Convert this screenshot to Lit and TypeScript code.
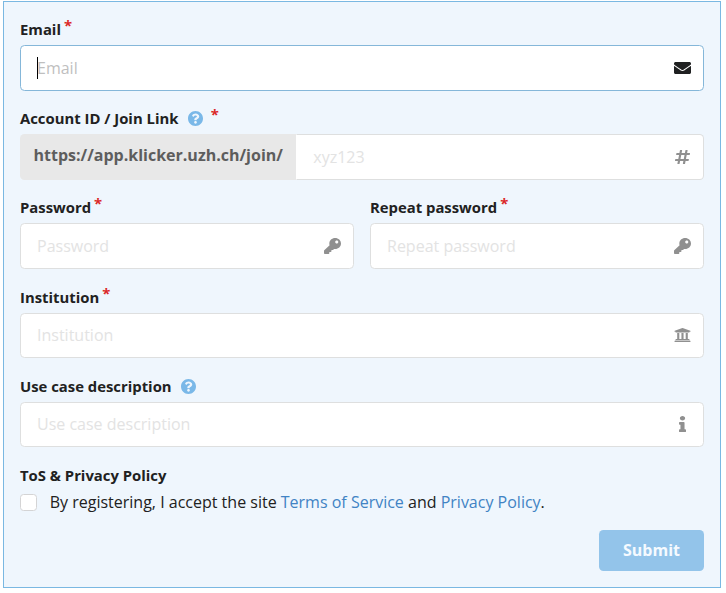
import { LitElement, html, css, svg, nothing } from "lit";
import { customElement, property } from "lit/decorators.js";

const icons: Record<string, { box: string; w: number; h: number; d: string }> = {
  envelope: {
    box: "0 64 512 384", w: 17, h: 12,
    d: "M502.3 190.8c3.9-3.1 9.7-.2 9.7 4.7V400c0 26.5-21.5 48-48 48H48c-26.5 0-48-21.5-48-48V195.6c0-5 5.7-7.8 9.7-4.7 22.4 17.4 52.1 39.5 154.1 113.6 21.1 15.4 56.7 47.8 92.2 47.6 35.7.3 72-32.8 92.3-47.6 102-74.1 131.6-96.3 154-113.7zM256 320c23.2.4 56.6-29.2 73.4-41.4 132.7-96.3 142.8-104.7 173.4-128.7 5.8-4.5 9.2-11.5 9.2-18.9v-19c0-26.5-21.5-48-48-48H48c-26.5 0-48 21.5-48 48v19c0 7.4 3.4 14.3 9.2 18.9 30.6 23.9 40.7 32.4 173.4 128.7 16.8 12.2 50.2 41.8 73.4 41.4z",
  },
  hashtag: {
    box: "0 0 448 512", w: 15, h: 16,
    d: "M440.667 182.109l7.143-40c1.313-7.355-4.342-14.109-11.813-14.109h-74.81l14.623-81.891C377.123 38.754 371.468 32 363.997 32h-40.632a12 12 0 0 0-11.813 9.891L296.175 128H197.54l14.623-81.891C213.477 38.754 207.822 32 200.35 32h-40.632a12 12 0 0 0-11.813 9.891L132.528 128H53.432a12 12 0 0 0-11.813 9.891l-7.143 40C33.163 185.246 38.818 192 46.289 192h74.81L98.242 320H19.146a12 12 0 0 0-11.813 9.891l-7.143 40C-1.123 377.246 4.532 384 12.003 384h74.81L72.19 465.891C70.877 473.246 76.532 480 84.003 480h40.632a12 12 0 0 0 11.813-9.891L151.826 384h98.634l-14.623 81.891C234.523 473.246 240.178 480 247.65 480h40.632a12 12 0 0 0 11.813-9.891L315.472 384h79.096a12 12 0 0 0 11.813-9.891l7.143-40c1.313-7.355-4.342-14.109-11.813-14.109h-74.81l22.857-128h79.096a12 12 0 0 0 11.813-9.891zM261.889 320h-98.634l22.857-128h98.634l-22.857 128z",
  },
  key: {
    box: "0 0 512 512", w: 17, h: 16,
    d: "M512 176.001C512 273.203 433.202 352 336 352c-11.22 0-22.19-1.062-32.827-3.069l-24.012 27.014A23.999 23.999 0 0 1 261.223 384H224v40c0 13.255-10.745 24-24 24h-40v40c0 13.255-10.745 24-24 24H24c-13.255 0-24-10.745-24-24v-78.059c0-6.365 2.529-12.47 7.029-16.971l161.802-161.802C163.108 213.814 160 195.271 160 176 160 78.798 238.797.001 335.999 0 433.488-.001 512 78.511 512 176.001zM336 128c0 26.51 21.49 48 48 48s48-21.49 48-48-21.49-48-48-48-48 21.49-48 48z",
  },
  university: {
    box: "0 0 512 512", w: 17, h: 16,
    d: "M496 128v16a8 8 0 0 1-8 8h-24v12c0 6.627-5.373 12-12 12H60c-6.627 0-12-5.373-12-12v-12H24a8 8 0 0 1-8-8v-16a8 8 0 0 1 4.941-7.392l232-88a7.996 7.996 0 0 1 6.118 0l232 88A8 8 0 0 1 496 128zm-24 304H40c-13.255 0-24 10.745-24 24v16a8 8 0 0 0 8 8h464a8 8 0 0 0 8-8v-16c0-13.255-10.745-24-24-24zM96 192v192H60c-6.627 0-12 5.373-12 12v20h416v-20c0-6.627-5.373-12-12-12h-36V192h-64v192h-64V192h-64v192h-64V192H96z",
  },
  info: {
    box: "0 0 192 512", w: 7, h: 16,
    d: "M20 424.229h20V279.771H20c-11.046 0-20-8.954-20-20V212c0-11.046 8.954-20 20-20h112c11.046 0 20 8.954 20 20v212.229h20c11.046 0 20 8.954 20 20V492c0 11.046-8.954 20-20 20H20c-11.046 0-20-8.954-20-20v-47.771c0-11.046 8.954-20 20-20zM96 0C56.235 0 24 32.235 24 72s32.235 72 72 72 72-32.235 72-72S135.764 0 96 0z",
  },
  question: {
    box: "8 8 496 496", w: 15, h: 15,
    d: "M504 256c0 136.997-111.043 248-248 248S8 392.997 8 256C8 119.083 119.043 8 256 8s248 111.083 248 248zM262.655 90c-54.497 0-89.255 22.957-116.549 63.758-3.536 5.286-2.353 12.415 2.715 16.258l34.699 26.31c5.205 3.947 12.621 3.008 16.665-2.122 17.864-22.658 30.113-35.797 57.303-35.797 20.429 0 45.698 13.148 45.698 32.958 0 14.976-12.363 22.667-32.534 33.976C247.128 238.528 216 254.941 216 296v4c0 6.627 5.373 12 12 12h56c6.627 0 12-5.373 12-12v-1.333c0-28.462 83.186-29.647 83.186-106.667 0-58.002-60.165-102-116.531-102zM256 338c-25.365 0-46 20.635-46 46 0 25.364 20.635 46 46 46s46-20.636 46-46c0-25.365-20.635-46-46-46z",
  },
};

const icon = (name: string) => {
  const i = icons[name];
  return html`<svg class="icon" width=${i.w} height=${i.h} viewBox=${i.box} preserveAspectRatio="none" aria-hidden="true">
    ${svg`<path fill="currentColor" d=${i.d}></path>`}
  </svg>`;
};

@customElement("form-field")
class FormField extends LitElement {
  @property() label = "";
  @property() hint = "";
  @property() prefixText = "";
  @property() icon = "";
  @property({ type: Boolean }) help = false;
  @property({ type: Boolean }) required = false;
  @property({ type: Boolean }) active = false;

  static styles = css`
    :host { display: block; min-width: 0; }
    .label {
      display: flex; align-items: center; height: 27.6px; box-sizing: border-box;
      padding: 0.6px 0 4px; font-size: 14.857px; font-weight: 700; line-height: 23px;
      white-space: nowrap;
    }
    .help { display: flex; margin-left: 9.6px; color: #7ab8e8; }
    .star { margin: -8px 0 0 3px; color: #db2828; }
    .help + .star { margin-left: 7.8px; }
    .control {
      display: flex; box-sizing: border-box; height: 45.6px; font-size: 16px;
    }
    .prefix {
      display: flex; align-items: center; width: 276px; box-sizing: border-box;
      padding: 0 0 4px 13.5px; background: #e8e8e8; color: #5d5d5d; font-weight: 700;
      border-radius: 4.5px 0 0 4.5px; white-space: nowrap;
    }
    .box {
      flex: 1; min-width: 0; display: flex; align-items: center; box-sizing: border-box;
      border: 1px solid #dedfdf; border-radius: 4.5px; background: #fff; padding-left: 16px;
      color: #e3e3e3;
    }
    .prefix + .box { border-left-color: transparent; border-radius: 0 4.5px 4.5px 0; padding-left: 16.3px; }
    .box.active { border-color: #85b7d9; color: #bfbfbf; }
    .caret { width: 1px; height: 22px; margin-right: -1px; background: #000; }
    .hint { flex: 1; white-space: nowrap; }
    .slot { width: 41px; display: flex; justify-content: center; color: #909090; }
    .active .slot { padding-top: 1px; color: #1f2021; }
    .icon { display: block; }
  `;

  render() {
    return html`
      <div class="label">
        <span>${this.label}</span>
        ${this.help ? html`<span class="help">${icon("question")}</span>` : nothing}
        ${this.required ? html`<span class="star">*</span>` : nothing}
      </div>
      <div class="control">
        ${this.prefixText ? html`<span class="prefix">${this.prefixText}</span>` : nothing}
        <div class="box ${this.active ? "active" : ""}">
          ${this.active ? html`<span class="caret"></span>` : nothing}
          <span class="hint">${this.hint}</span>
          <span class="slot">${icon(this.icon)}</span>
        </div>
      </div>
    `;
  }
}

@customElement("app-root")
class AppRoot extends LitElement {
  static styles = css`
    :host {
      display: block; box-sizing: border-box; height: 593px; padding: 1px 5px 5px 3px;
      background: #fff; color: #212121; font-family: "Open Sans", "Noto Sans", sans-serif;
      font-size: 16px;
    }
    .panel {
      box-sizing: border-box; height: 587px; border: 1px solid #7ab8e2;
      background: #eff6fd; padding: 15.35px 16px 16px;
      display: flex; flex-direction: column;
    }
    .fields { display: flex; flex-direction: column; gap: 16px; }
    .pair { display: grid; grid-template-columns: 1fr 1fr; gap: 16px; }
    .title {
      margin-top: 16.6px; font-size: 14.857px; font-weight: 700; line-height: 23px;
    }
    .accept { display: flex; align-items: center; height: 24px; margin-top: 3px; }
    .check {
      width: 17px; height: 17px; box-sizing: border-box; margin: 1px 12.7px 0 0;
      border: 1px solid #d4d4d5; border-radius: 3.5px; background: #fff;
    }
    .link { color: #4183c4; text-decoration: none; }
    .submit {
      align-self: flex-end; margin: auto 0 0; width: 105px; height: 41px; padding: 0 0 1px;
      border: 0; border-radius: 4.5px; background: #93c4ea; color: #f5faff;
      font: 700 16px "Open Sans", "Noto Sans", sans-serif;
    }
  `;

  render() {
    return html`
      <form class="panel">
        <div class="fields">
          <form-field label="Email" hint="Email" icon="envelope" required active></form-field>
          <form-field label="Account ID / Join Link" hint="xyz123" icon="hashtag"
            .prefixText=${"https://app.klicker.uzh.ch/join/"} help required></form-field>
          <div class="pair">
            <form-field label="Password" hint="Password" icon="key" required></form-field>
            <form-field label="Repeat password" hint="Repeat password" icon="key" required></form-field>
          </div>
          <form-field label="Institution" hint="Institution" icon="university" required></form-field>
          <form-field label="Use case description" hint="Use case description" icon="info" help></form-field>
        </div>
        <div class="title">ToS &amp; Privacy Policy</div>
        <div class="accept">
          <span class="check"></span>
          <span>By registering, I accept the site <a class="link" href="#">Terms of Service</a> and <a class="link" href="#">Privacy Policy</a>.</span>
        </div>
        <button class="submit" type="button">Submit</button>
      </form>
    `;
  }
}
